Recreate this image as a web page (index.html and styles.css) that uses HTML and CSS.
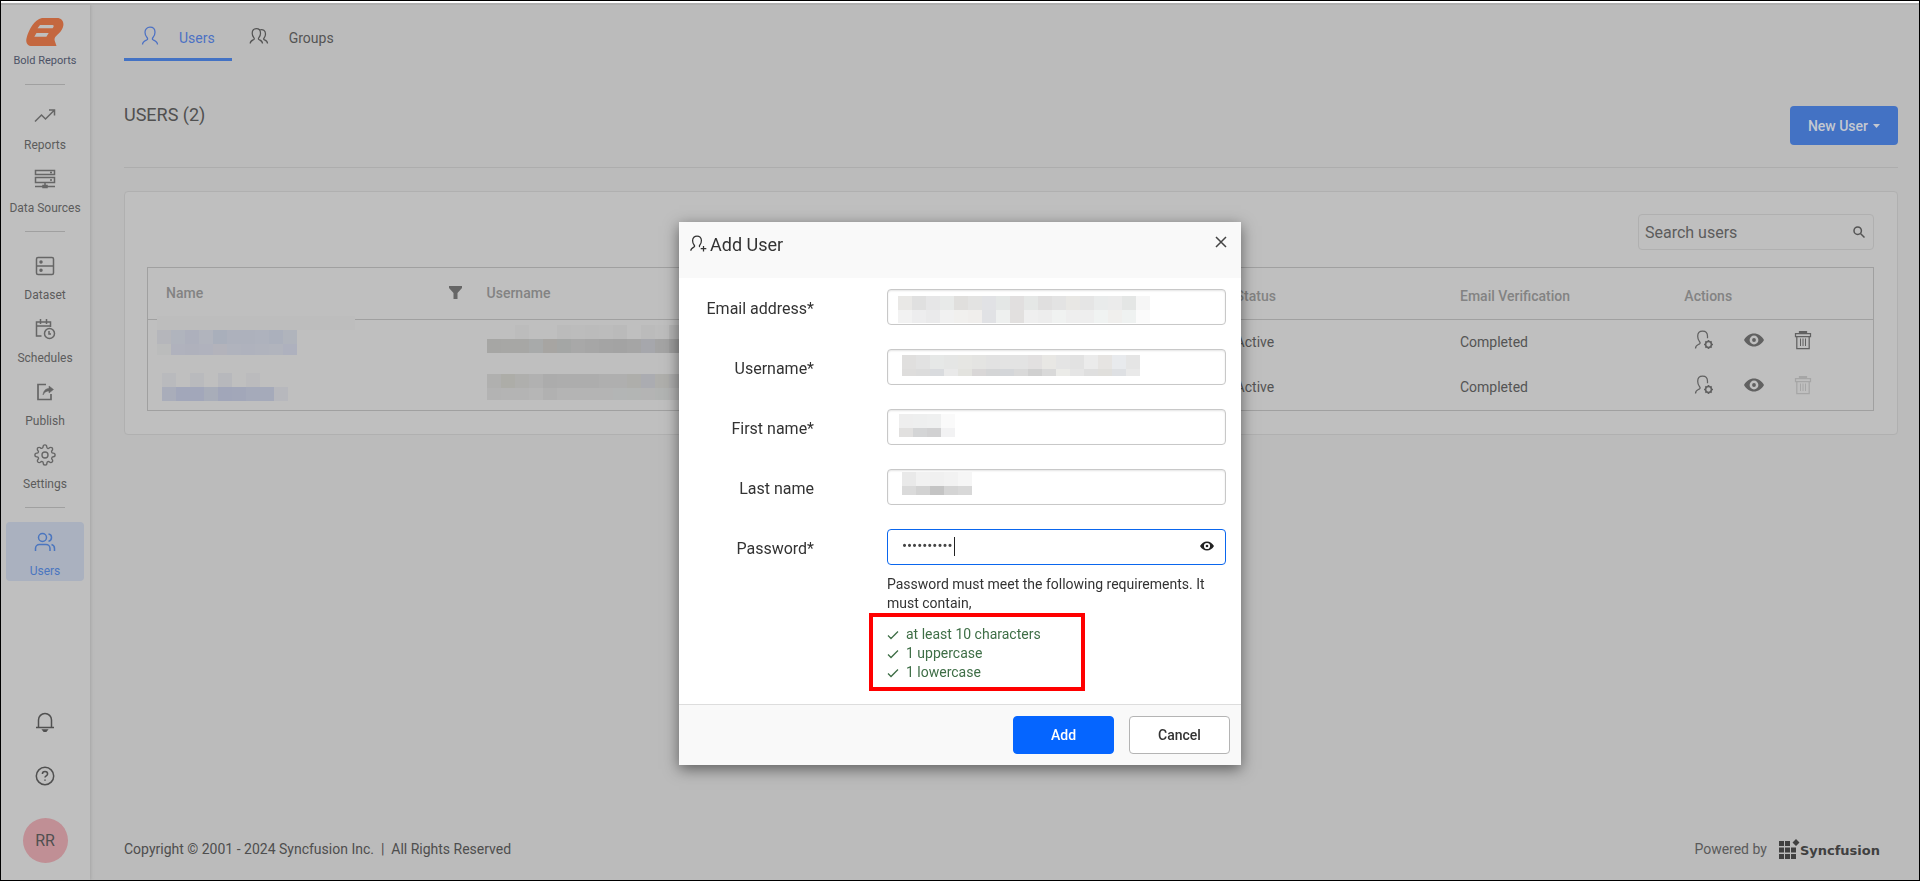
FILE: index.html
```
<!DOCTYPE html>
<html lang="en">
<head>
<meta charset="utf-8">
<title>Bold Reports - Users</title>
<link rel="stylesheet" href="styles.css">
</head>
<body>
<svg class="sprite" aria-hidden="true">
  <symbol id="i-user" viewBox="0 0 18 20"><path d="M1.500 18.500c0-3 2-3.600 4.500-4.700.9-.5.7-1.500 0-2.300C4.700 10 4 8.200 4 6.200 4 3.200 6.100 1.200 9 1.200s5 2 5 5c0 2-.7 3.800-2 5.300-.7.8-.9 1.800 0 2.300 2.500 1.100 4.500 1.700 4.500 4.700"/></symbol>
  <symbol id="i-gear-user" viewBox="0 0 20 20"><path d="M1.500 18.500c0-3 1.600-3.400 4-4.600.9-.5.7-1.500 0-2.300C4.300 10.200 3.700 8.300 3.700 6.300c0-3 2-5.100 4.900-5.100s4.900 2 4.900 5.100v2"/><circle cx="14.500" cy="14.500" r="2.900" stroke-width="1.500"/><path stroke-width="1.600" d="M14.500 10v1.700M14.500 17.300V19M10 14.500h1.700M17.300 14.500H19M11.400 11.400l1.100 1.100M16.500 16.500l1.100 1.100M11.400 17.600l1.100-1.100M16.500 12.500l1.100-1.100"/></symbol>
  <symbol id="i-eye" viewBox="0 0 20 14"><path fill="currentColor" stroke="none" fill-rule="evenodd" d="M0 7C2.300 3 5.800.5 10 .5S17.700 3 20 7c-2.300 4-5.800 6.500-10 6.500S2.300 11 0 7zm10-4.400a4.400 4.400 0 1 0 0 8.800 4.400 4.400 0 0 0 0-8.800zm0 2.500a1.900 1.900 0 1 1 0 3.800 1.900 1.900 0 0 1 0-3.800z"/></symbol>
  <symbol id="i-trash" viewBox="0 0 18 20"><path d="M1.500 3.500h15v3h-15zM2.800 6.500v12h12.400v-12"/><path stroke-width="1" d="M6.500 8.500v7.500M9 8.500v7.500M11.500 8.500v7.500"/><path d="M5.500 3V1.500h7V3"/><path d="M6 2.300h6" stroke-width="2"/></symbol>
  <symbol id="i-check" viewBox="0 0 12 10"><path d="M1 5.500 4 8.500 11 1.500"/></symbol>
</svg>

<div class="app">
  <nav class="sidebar" aria-label="Main">
    <a class="brand" href="#">
      <svg width="38" height="30" viewBox="0 0 38 30"><path fill="#c4673f" d="M16 1h15c5 0 7.500 4 6 9-.9 3.200-3.500 6-5.600 7.800-2.400 2-3.400 4-2.600 6.200L30.500 29H6c-4.600 0-6.600-3.500-5.400-8C2.500 13.500 8 2.500 16 1z"/><path fill="#bfbfbf" d="M14 8h12.500c1.300 0 1.600 1 .8 2.200l-.7 1.100H11.500zM10.500 16h12.200l-2.300 3.700H8.300z"/></svg>
      <span>Bold Reports</span>
    </a>
    <hr class="rule">
    <a class="nav-item" href="#"><svg width="22" height="22" viewBox="0 0 22 22"><path d="M1 16.500 7.500 10l4 4L20.500 5M15 5h5.500v5.500"/></svg><span>Reports</span></a>
    <a class="nav-item" href="#"><svg width="22" height="22" viewBox="0 0 22 22"><path d="M1.500 2.500h19v4h-19zM1.500 9.500h19v5h-19zM1 18.500h20M11 14.500v3M16 4.500h2M16 12h2"/><path fill="currentColor" d="M9 17.500h4v2H9z"/></svg><span>Data Sources</span></a>
    <hr class="rule">
    <a class="nav-item" href="#"><svg width="22" height="22" viewBox="0 0 22 22"><rect x="2.500" y="2.500" width="17" height="17" rx="1.500"/><path d="M2.500 11h17"/><circle cx="7" cy="7" r="1" fill="currentColor"/><circle cx="7" cy="15.300" r="1" fill="currentColor"/></svg><span>Dataset</span></a>
    <a class="nav-item" href="#"><svg width="22" height="22" viewBox="0 0 22 22"><path d="M7.500 18H2.500V4h14v5M2.500 8h14M6.500 1v5M12.500 1v5"/><circle cx="15.500" cy="15.500" r="5"/><path d="M15 13v3h2"/></svg><span>Schedules</span></a>
    <a class="nav-item" href="#"><svg width="22" height="22" viewBox="0 0 22 22"><path stroke-width="1.700" d="M12 3.500H4v15h13V13"/><path fill="currentColor" stroke-width=".5" d="M9 14c.5-4.500 3-6.500 6-6.500V5L19.500 8.500 15 12V10c-2.500 0-4.500 1-6 4z"/></svg><span>Publish</span></a>
    <a class="nav-item" href="#"><svg width="22" height="22" viewBox="0 0 24 24"><circle cx="12" cy="12" r="3.300"/><path d="M19.400 15a1.650 1.650 0 0 0 .33 1.820l.06.06a2 2 0 1 1-2.830 2.830l-.06-.06a1.650 1.650 0 0 0-2.800 1.170V21a2 2 0 0 1-4 0v-.09a1.650 1.650 0 0 0-2.900-1.200l-.06.06a2 2 0 1 1-2.830-2.830l.06-.06A1.650 1.650 0 0 0 3.180 14H3a2 2 0 0 1 0-4h.09a1.650 1.650 0 0 0 1.180-2.900l-.06-.06a2 2 0 1 1 2.830-2.830l.06.06A1.650 1.650 0 0 0 9.900 3.100V3a2 2 0 0 1 4 0v.09a1.650 1.650 0 0 0 2.900 1.180l.06-.06a2 2 0 1 1 2.830 2.830l-.06.06a1.650 1.650 0 0 0 1.180 2.800H21a2 2 0 0 1 0 4h-.09a1.650 1.650 0 0 0-1.510 1.100z"/></svg><span>Settings</span></a>
    <hr class="rule">
    <a class="nav-item nav-item-active" href="#"><svg width="22" height="22" viewBox="0 0 22 22"><circle cx="8.500" cy="6.500" r="4"/><path d="M1.500 20v-2.500c0-2 1.500-4 4-4H12c2.500 0 4 2 4 4V20M14.500 3c4 .5 4 6.500 0 7.200M17.500 13.500c2 .5 3 2 3 4V20"/></svg><span>Users</span></a>
    <div class="side-bottom">
      <button class="icon-btn" aria-label="Notifications"><svg width="20" height="20" viewBox="0 0 20 20"><path d="M1 15.500h18M3.500 15.500V8a6.500 6.500 0 0 1 13 0v7.500"/><path fill="currentColor" d="M8 18h4l-1 1.200H9z"/></svg></button>
      <button class="icon-btn" aria-label="Help"><svg width="20" height="20" viewBox="0 0 20 20"><circle cx="10" cy="10" r="8.700"/><path d="M7.400 8c0-3.300 5.200-3.300 5.200 0 0 1.800-2.600 1.800-2.600 3.500M10 13.500v1.200"/></svg></button>
      <button class="avatar">RR</button>
    </div>
  </nav>

  <main class="main">
    <div class="tabs">
      <a class="tab tab-active" href="#"><svg width="18" height="20"><use href="#i-user"/></svg><span>Users</span></a>
      <a class="tab" href="#"><svg width="20" height="18" viewBox="0 0 20 18"><path d="M1.200 16.500c0-2.600 1.600-3 3.600-4 .7-.4.600-1.200 0-1.900-1-1.200-1.600-2.700-1.600-4.400C3.200 3.300 4.900 1.500 7.400 1.500s4.100 1.800 4.100 4.700c0 1.700-.6 3.200-1.600 4.400-.6.700-.7 1.500 0 1.900 2 1 3.600 1.400 3.600 4M10.500 3c3.600-1.200 6 .8 6 4 0 1.700-.6 3-1.400 4-.6.700-.6 1.300 0 1.700 2 .9 3.400 1.300 3.400 3.800"/></svg><span>Groups</span></a>
    </div>

    <header class="page-head">
      <h1>USERS (2)</h1>
      <button class="btn-new">New User <svg width="7" height="4" viewBox="0 0 7 4"><path fill="currentColor" stroke="none" d="M0 0h7L3.500 4z"/></svg></button>
    </header>

    <section class="card">
      <label class="search">
        <input type="text" placeholder="Search users" aria-label="Search users">
        <svg width="12" height="12" viewBox="0 0 12 12"><circle cx="4.700" cy="4.700" r="3.700"/><path d="M7.500 7.500 11.500 11.500"/></svg>
      </label>
      <table class="grid">
        <colgroup><col class="c-name"><col class="c-username"><col class="c-status"><col class="c-email"><col></colgroup>
        <thead>
          <tr>
            <th class="th-filter"><span class="th-flex">Name <svg width="13" height="13" viewBox="0 0 13 13"><path fill="currentColor" stroke="none" d="M0 0h13v2L8.500 7v6h-4V7L0 2z"/></svg></span></th>
            <th class="th-filter">Username</th><th>Status</th><th>Email Verification</th><th>Actions</th>
          </tr>
        </thead>
        <tbody>
          <tr class="row-first">
            <td class="td-name"><span class="mosaic mosaic-name-1" data-mosaic="name1"></span></td>
            <td class="td-username"><span class="mosaic" data-mosaic="user1"></span></td>
            <td>Active</td><td>Completed</td>
            <td><div class="actions"><button aria-label="Manage"><svg width="20" height="20"><use href="#i-gear-user"/></svg></button><button aria-label="View"><svg width="20" height="14"><use href="#i-eye"/></svg></button><button aria-label="Delete"><svg width="18" height="20"><use href="#i-trash"/></svg></button></div></td>
          </tr>
          <tr>
            <td class="td-name2"><span class="mosaic" data-mosaic="name2"></span></td>
            <td><span class="mosaic" data-mosaic="user2"></span></td>
            <td>Active</td><td>Completed</td>
            <td><div class="actions"><button aria-label="Manage"><svg width="20" height="20"><use href="#i-gear-user"/></svg></button><button aria-label="View"><svg width="20" height="14"><use href="#i-eye"/></svg></button><button aria-label="Delete" disabled><svg width="18" height="20"><use href="#i-trash"/></svg></button></div></td>
          </tr>
        </tbody>
      </table>
    </section>

    <footer class="footer">
      <span>Copyright © 2001 - 2024 Syncfusion Inc. &nbsp;|&nbsp; All Rights Reserved</span>
      <span class="powered">Powered by
        <span class="sync"><svg width="21" height="20" viewBox="0 0 21 20"><path fill="#404040" stroke="none" d="M0 2h5v5H0zM6 2h5v5H6zM0 8.500h5v5H0zM6 8.500h5v5H6zM12 8.500h5v5h-5zM0 15h5v5H0zM6 15h5v5H6zM12 15h5v5h-5zM17 0l3.500 3.500L17 7l-3.500-3.500z"/></svg><b>Syncfusion</b></span>
      </span>
    </footer>
  </main>
</div>

<div class="overlay">
  <form class="modal" role="dialog" aria-labelledby="dlg-title">
    <header class="modal-head">
      <svg width="17" height="17" viewBox="0 0 17 17"><path d="M.8 15.800c0-2.400 1.300-2.900 3.300-3.900.8-.4.6-1.200 0-1.900C3.100 8.900 2.600 7.300 2.600 5.600 2.600 2.900 4.500 1 7 1s4.400 1.900 4.400 4.600c0 1.700-.5 3.300-1.500 4.400-.6.700-.8 1.400 0 1.900M13.500 11v5.500M10.700 13.700h5.600"/></svg>
      <h2 id="dlg-title">Add User</h2>
      <button type="button" class="close" aria-label="Close"><svg width="12" height="12" viewBox="0 0 12 12"><path d="M1 1l10 10M11 1 1 11"/></svg></button>
    </header>
    <div class="modal-body">
      <label for="f-email">Email address*</label>
      <div class="field"><input id="f-email" type="text"><span class="mosaic mask-email" data-mosaic="fEmail"></span></div>
      <label for="f-user">Username*</label>
      <div class="field"><input id="f-user" type="text"><span class="mosaic mask-user" data-mosaic="fUser"></span></div>
      <label for="f-first">First name*</label>
      <div class="field"><input id="f-first" type="text"><span class="mosaic mask-first" data-mosaic="fFirst"></span></div>
      <label for="f-last">Last name</label>
      <div class="field"><input id="f-last" type="text"><span class="mosaic mask-last" data-mosaic="fLast"></span></div>
      <label for="f-pass">Password*</label>
      <div class="field field-active"><input id="f-pass" type="password" value="Password12"><span class="caret"></span><button type="button" class="reveal" aria-label="Show password"><svg width="14" height="10"><use href="#i-eye"/></svg></button></div>
      <div class="rules">
        <p>Password must meet the following requirements. It must contain,</p>
        <ul>
          <li><svg width="12" height="10"><use href="#i-check"/></svg>at least 10 characters</li>
          <li><svg width="12" height="10"><use href="#i-check"/></svg>1 uppercase</li>
          <li><svg width="12" height="10"><use href="#i-check"/></svg>1 lowercase</li>
        </ul>
      </div>
    </div>
    <footer class="modal-foot">
      <button type="button" class="btn btn-primary">Add</button>
      <button type="button" class="btn">Cancel</button>
    </footer>
  </form>
</div>
<script src="script.js"></script>
</body>
</html>
```

FILE: styles.css
```
* { box-sizing: border-box; }
html { background: #000; }
body {
  margin: 0;
  min-height: 100vh;
  display: flex;
  border: 1px solid #000;
  background: #bbb;
  color: #545454;
  font: 14px/20px Roboto, "Liberation Sans", sans-serif;
}
a { color: inherit; text-decoration: none; }
button { font: inherit; color: inherit; background: none; border: 0; padding: 0; cursor: pointer; }
svg { display: block; flex: none; fill: none; stroke: currentColor; stroke-width: 1.25px; }
.sprite { display: none; }

.app {
  flex: 1;
  display: flex;
  border-top: 2px solid #fff;
  box-shadow: inset 0 2px 0 #b0b0b0;
}

/* Sidebar */
.sidebar {
  width: 89px;
  margin-top: 2px;
  padding: 12px 6px 17px 5px;
  display: flex;
  flex-direction: column;
  align-items: stretch;
  background: #bfbfbf;
  box-shadow: 1px 0 3px #a6a6a6;
}
.brand {
  display: flex;
  flex-direction: column;
  align-items: center;
  gap: 4px;
  color: #4c5266;
  font-size: 11px;
}
.brand svg { stroke: none; }
.rule { width: 40px; height: 1px; margin: 13px auto 14px; border: 0; background: #a0a0a0; }
.brand + .rule { margin-bottom: 11px; }
.nav-item {
  height: 59px;
  margin-bottom: 4px;
  padding-top: 9px;
  display: flex;
  flex-direction: column;
  align-items: center;
  gap: 8px;
  border-radius: 4px;
  color: #666;
  font-size: 12px;
}
.nav-item:has(+ .rule) { margin-bottom: 0; }
.nav-item span { color: #5c5c5c; }
.nav-item svg { stroke-width: 1.5px; }
.nav-item-active, .nav-item-active span { color: #4b76bf; }
.nav-item-active { background: #aab1bf; }
.side-bottom {
  margin-top: auto;
  display: flex;
  flex-direction: column;
  align-items: center;
  gap: 34px;
  color: #505050;
}
.icon-btn svg { stroke-width: 1.5px; }
.avatar {
  width: 45px;
  height: 45px;
  margin-top: -2px;
  border-radius: 50%;
  background: #c08f95;
  color: #505050;
  font-size: 16px;
}

/* Page */
.main { flex: 1; padding: 0 21px 0 34px; display: flex; flex-direction: column; }
.tabs { display: flex; margin-top: 10px; }
.tab { display: flex; align-items: center; gap: 20px; padding: 10px 17px 8px; height: 48px; }
.tab svg { margin-bottom: 5px; }
.tab-active { padding-bottom: 5px; color: #4c71c4; border-bottom: 3px solid #4372c4; }
.page-head {
  display: flex;
  justify-content: space-between;
  align-items: flex-start;
  margin-top: 45px;
  padding-bottom: 22px;
  border-bottom: 1px solid #adadad;
}
h1 { margin: 0; font-size: 18px; line-height: 18px; font-weight: 400; color: #505050; }
.btn-new {
  display: flex;
  align-items: center;
  gap: 5px;
  height: 39px;
  padding: 0 18px;
  border-radius: 4px;
  background: #4372c4;
  color: #c4c8d0;
  font-weight: 500;
}
.card {
  display: flex;
  flex-direction: column;
  margin-top: 23px;
  padding: 22px 23px 23px 22px;
  border: 1px solid #b0b0b0;
  border-radius: 4px;
  background: #bfbfbf;
}
.search {
  align-self: flex-end;
  width: 236px;
  height: 36px;
  display: flex;
  align-items: center;
  padding: 0 8px 0 6px;
  border: 1px solid #b0b0b0;
  border-radius: 4px;
}
.search input { flex: 1; min-width: 0; padding: 2px 0 0; border: 0; background: none; font: 16px/20px Roboto, sans-serif; outline: 0; }
.search input::placeholder { color: #5c5c5c; opacity: 1; }
.search svg { stroke-width: 1.5px; }

.grid {
  width: 100%;
  margin-top: 17px;
  table-layout: fixed;
  border-collapse: collapse;
  border: 1px solid #a0a0a0;
}
.c-name { width: 18.6%; }
.c-username { width: 43.4%; }
.c-status { width: 13%; }
.c-email { width: 13%; }
th { height: 52px; padding: 4px 18px 0; text-align: left; font-weight: 500; color: #838383; border-bottom: 1px solid #a0a0a0; }
.th-filter { padding-top: 0; padding-right: 7px; padding-bottom: 2px; }
.th-flex { display: flex; align-items: center; justify-content: space-between; }
.th-flex svg { color: #666; }
td { height: 47px; padding: 0 18px; }
.row-first td { height: 44px; }
.row-first td.td-username { padding-bottom: 5px; }
.row-first td.td-name { padding: 0 9px; vertical-align: top; }
.td-name2 { padding: 0 14px; }
.actions { display: flex; align-items: center; gap: 30px; padding: 0 0 4px 10px; color: #616161; }
.actions button:disabled { color: #a6a6a6; }

.mosaic { display: block; }
.mosaic svg { stroke: none; }
.mosaic-name-1 { margin-top: -4px; }

.footer {
  margin-top: auto;
  padding-bottom: 21px;
  display: flex;
  justify-content: space-between;
  align-items: center;
  color: #4e4e4e;
}
.powered { display: flex; align-items: center; gap: 12px; padding-right: 18px; color: #5a5a5a; }
.sync { display: flex; align-items: flex-end; color: #404040; }
.sync b { font: bold 13px/16px "DejaVu Sans", sans-serif; }

/* Dialog */
.overlay { position: fixed; inset: 0; display: flex; justify-content: center; align-items: flex-start; padding-top: 222px; }
.modal { width: 562px; background: #fff; color: #333; box-shadow: 0 4px 14px rgba(0, 0, 0, .5); }
.modal-head { display: flex; align-items: flex-start; gap: 3px; height: 56px; padding: 13px 14px 0 11px; background: #f9f9f9; }
.modal-head h2 { margin: 0; flex: 1; font-size: 18px; line-height: 20px; font-weight: 400; }
.close { padding-top: 1px; color: #444; }
.close svg { stroke-width: 1.5px; }
.modal-body {
  display: grid;
  grid-template-columns: 135px 1fr;
  column-gap: 73px;
  row-gap: 24px;
  align-items: center;
  padding: 11px 15px 21px 0;
}
.modal-body label { padding-top: 3px; text-align: right; font-size: 16px; white-space: nowrap; }
.field { position: relative; display: flex; }
.field input {
  width: 100%;
  height: 36px;
  padding: 0 36px 0 14px;
  border: 1px solid #c8c8c8;
  border-radius: 4px;
  box-shadow: inset 0 1px 2px #e4e4e4;
  color: #444;
  font: 14px/20px Roboto, sans-serif;
  outline: 0;
}
.field-active input { padding-bottom: 3px; border-color: #0a66ee; box-shadow: none; font-size: 15px; }
.field .mosaic { position: absolute; }
.mask-email { left: 11px; top: 7px; }
.mask-user { left: 15px; top: 6px; }
.mask-first { left: 12px; top: 5px; }
.mask-last { left: 15px; top: 3px; }
.caret { position: absolute; left: 67px; top: 8px; width: 1px; height: 19px; background: #222; }
.reveal { position: absolute; right: 12px; top: 12px; color: #222; }
.rules { grid-column: 2; margin-top: -14px; line-height: 19px; }
.rules p, .rules ul { margin: 0; padding: 0; }
.rules ul {
  width: 216px;
  margin: 0 0 -8px -18px;
  padding: 8px 14px 5px;
  border: 4px solid #f00;
  list-style: none;
  color: #3e6e46;
}
.rules li { display: flex; align-items: center; gap: 7px; }
.modal-foot {
  display: flex;
  justify-content: flex-end;
  gap: 15px;
  padding: 11px 11px;
  border-top: 1px solid #ddd;
  background: #f9f9f9;
}
.btn { width: 101px; height: 38px; border: 1px solid #b4b4b4; border-radius: 4px; background: #fff; font-weight: 500; color: #333; }
.btn-primary { background: #0565ff; border-color: #0565ff; color: #fff; }
```

FILE: script.js
```
// Each mask is a list of rows: { h: row height, c: cell colours }. Cells are 14px wide.
const masks = {
  name1: [
    { h: 14, w: 198, c: ["#bdbdbd"] },
    { h: 14, c: ["#b5b6bb", "#b0b4bd", "#adb0bc", "#b1b4bd", "#a9afbb", "#adb1bc", "#adb1bc", "#aeb2bd", "#abb0bc", "#b0b4bc"] },
    { h: 11, c: ["#bbbcbc", "#b0b2bd", "#afb1bc", "#b0b2bd", "#b3b3bb", "#b0b3bd", "#afb2bd", "#b0b3bd", "#b1b4bd", "#aeb1be"] }
  ],
  name2: [
    { h: 14, c: ["#b9babd", "#bfbfbf", "#b9babd", "#bfbfbf", "#b7b8bc", "#bfbfbf", "#bbbbbd"] },
    { h: 14, c: ["#a9adba", "#a2a7ba", "#a2a7ba", "#a8adb9", "#a1a6b9", "#a2a7b9", "#a5aaba", "#a5aaba", "#b7b8bd"] }
  ],
  user1: [
    { h: 14, c: ["#bfbfbf", "#bfbfbf", "#bcbcbc", "#bfbfbf", "#bfbfbf", "#bbbbbb", "#bcbcbc", "#bbbbbb", "#bcbcbc", "#bababa", "#bfbfbf", "#bbbbbb", "#bdbdbd", "#b4b4b4"] },
    { h: 14, c: ["#a6a6a4", "#a7a7a5", "#a7a7a5", "#a8aaaa", "#a7a5a2", "#a4a6a5", "#a8a8a8", "#a6a6a6", "#a4a4a4", "#a3a3a3", "#a5a5a5", "#a6a7ac", "#a4a4a4", "#9e9e9e"] }
  ],
  user2: [
    { h: 14, c: ["#b0b0af", "#adada8", "#afafad", "#b1b1b1", "#acacac", "#adadad", "#adadad", "#adadad", "#afafaf", "#afafaf", "#aeaeab", "#abacb1", "#afafac", "#adadad"] },
    { h: 12, c: ["#b3b3b3", "#b4b4b4", "#b4b4b4", "#b6b6b6", "#b1b1b1", "#b4b4b4", "#b4b4b4", "#b4b4b4", "#b4b4b4", "#b3b5b5", "#b3b5b4", "#b4b4b4", "#b2b4b3", "#b4b4b4"] }
  ],
  fEmail: [
    { h: 14, c: ["#e9e8e6", "#e0e0e0", "#e6e6e7", "#e8eae9", "#e0dfdd", "#e3e3e2", "#e1e2e5", "#e4e7e6", "#e1dfdf", "#e5e7e6", "#e0dfdf", "#e3e3e3", "#e8e7e4", "#e5e5e5", "#e9ebeb", "#ebebeb", "#e4e6e5", "#f6f6f6"] },
    { h: 13, c: ["#f2f2f2", "#ededee", "#eaeaeb", "#f1f1f1", "#f1f0ee", "#f0eeec", "#e1e2e5", "#eef0ef", "#e2e0df", "#efefef", "#ededed", "#f0f2f1", "#eeeeee", "#eeeeee", "#f0f3f2", "#f0efed", "#eff2f1", "#fbfbfb"] }
  ],
  fUser: [
    { h: 14, c: ["#e0dfde", "#e2e2e2", "#e6e8e7", "#e5e6e5", "#e6e6e3", "#e4e4e2", "#e2e2e2", "#e3e3e3", "#e3e3e3", "#e2e0e0", "#e8e7e4", "#e4e4e4", "#e2e2e2", "#ebebeb", "#e6e4e2", "#e8eaed", "#e5e5e5"] },
    { h: 7, c: ["#dedddc", "#dcdcdc", "#d9dbde", "#e9e9e9", "#e3e3df", "#d9d7d7", "#d4d5d6", "#d4d6d9", "#d9d9d9", "#d0d0d0", "#d9d9d9", "#ebebe8", "#e5e5e5", "#dfdfdf", "#e0dfdc", "#dee0e3", "#e9e9e9"] }
  ],
  fFirst: [
    { h: 14, c: ["#eeeeee", "#eeefef", "#eff0f0", "#fafafa"] },
    { h: 9, c: ["#e1e0df", "#d4d5d6", "#d1d1d2", "#f2f2f3"] }
  ],
  fLast: [
    { h: 14, c: ["#e9e9e9", "#f1f1f1", "#f0f0f0", "#f2f2f2", "#f6f6f6"] },
    { h: 9, c: ["#dadada", "#d2d2d2", "#c4c4c4", "#d4d4d4", "#d8d8d8"] }
  ]
};

document.querySelectorAll("[data-mosaic]").forEach((el) => {
  let y = 0;
  let width = 0;
  let rects = "";
  masks[el.dataset.mosaic].forEach((row) => {
    const w = row.w || 14;
    row.c.forEach((fill, i) => {
      rects += `<rect x="${i * w}" y="${y}" width="${w}" height="${row.h}" fill="${fill}"/>`;
    });
    width = Math.max(width, row.c.length * w);
    y += row.h;
  });
  el.innerHTML = `<svg width="${width}" height="${y}" viewBox="0 0 ${width} ${y}" shape-rendering="crispEdges">${rects}</svg>`;
});
```
